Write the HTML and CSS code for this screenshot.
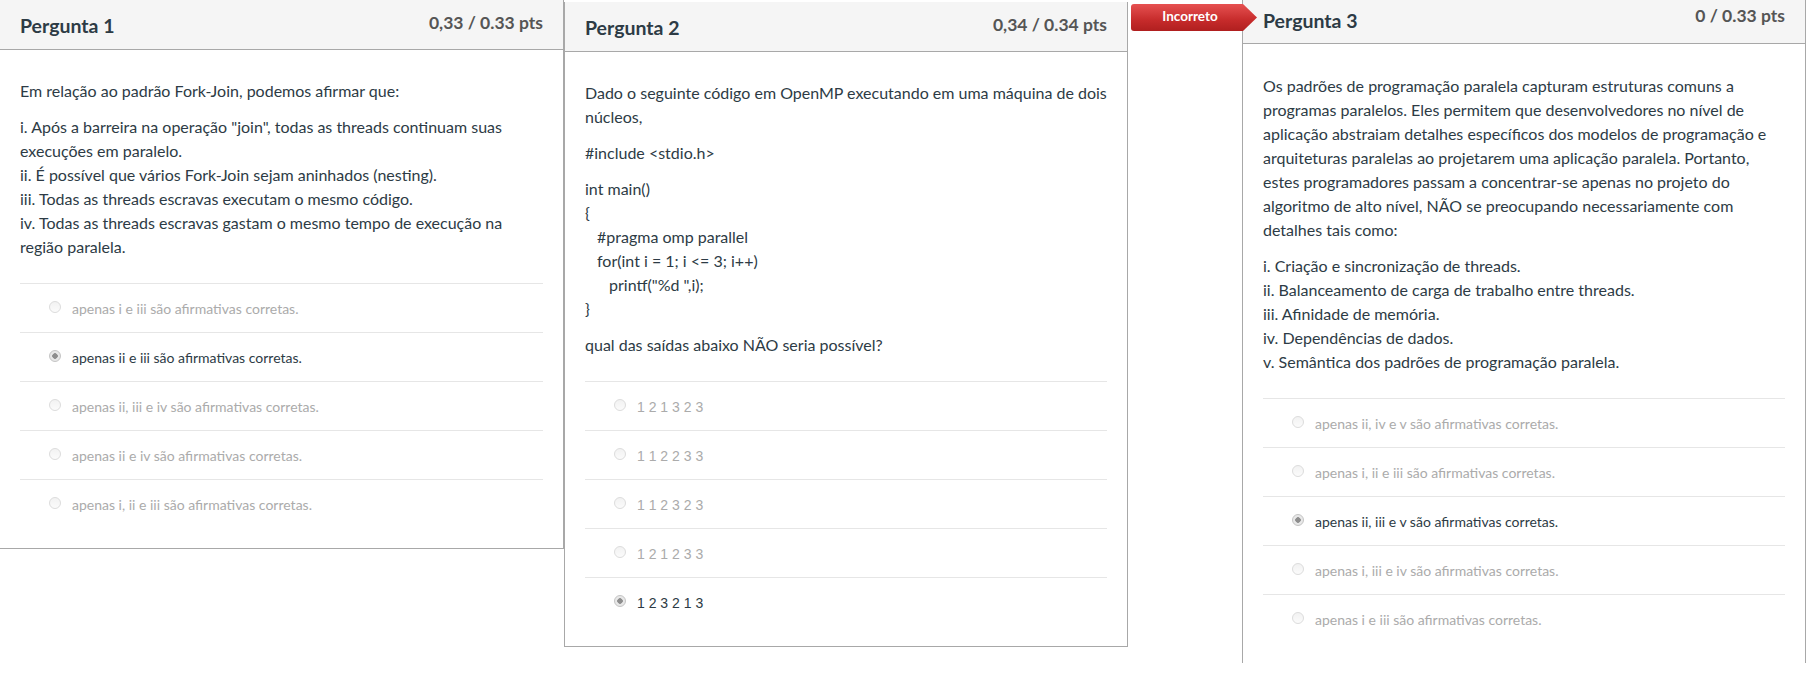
FILE: index.html
```html
<!DOCTYPE html>
<html lang="pt-BR">
<head>
<meta charset="utf-8">
<title>Perguntas</title>
<link rel="stylesheet" href="styles.css">
</head>
<body>
<main class="strip">
  <section class="card card--first">
    <header class="qhead">
      <h2 class="qname">Pergunta 1</h2>
      <span class="qpts">0,33 / 0.33 pts</span>
    </header>
    <div class="qbody">
      <div class="qtext">
        <p>Em relação ao padrão Fork-Join, podemos afirmar que:</p>
        <p>i. Após a barreira na operação "join", todas as threads continuam suas execuções em paralelo.<br>ii. É possível que vários Fork-Join sejam aninhados (nesting).<br>iii. Todas as threads escravas executam o mesmo código.<br>iv. Todas as threads escravas gastam o mesmo tempo de execução na região paralela.</p>
      </div>
      <ul class="answers">
        <li class="ans"><span class="radio"></span><span class="ans-text">apenas i e iii são afirmativas corretas.</span></li>
        <li class="ans ans--sel"><span class="radio"></span><span class="ans-text">apenas ii e iii são afirmativas corretas.</span></li>
        <li class="ans"><span class="radio"></span><span class="ans-text">apenas ii, iii e iv são afirmativas corretas.</span></li>
        <li class="ans"><span class="radio"></span><span class="ans-text">apenas ii e iv são afirmativas corretas.</span></li>
        <li class="ans"><span class="radio"></span><span class="ans-text">apenas i, ii e iii são afirmativas corretas.</span></li>
      </ul>
    </div>
  </section>

  <section class="card card--second">
    <header class="qhead">
      <h2 class="qname">Pergunta 2</h2>
      <span class="qpts">0,34 / 0.34 pts</span>
    </header>
    <div class="qbody">
      <div class="qtext">
        <p>Dado o seguinte código em OpenMP executando em uma máquina de dois núcleos,</p>
        <p>#include &lt;stdio.h&gt;</p>
        <p>int main()<br>{<br><span class="ind1">#pragma omp parallel</span><br><span class="ind1">for(int i = 1; i &lt;= 3; i++)</span><br><span class="ind2">printf("%d ",i);</span><br>}</p>
        <p>qual das saídas abaixo NÃO seria possível?</p>
      </div>
      <ul class="answers answers--nums">
        <li class="ans"><span class="radio"></span><span class="ans-text">1 2 1 3 2 3</span></li>
        <li class="ans"><span class="radio"></span><span class="ans-text">1 1 2 2 3 3</span></li>
        <li class="ans"><span class="radio"></span><span class="ans-text">1 1 2 3 2 3</span></li>
        <li class="ans"><span class="radio"></span><span class="ans-text">1 2 1 2 3 3</span></li>
        <li class="ans ans--sel"><span class="radio"></span><span class="ans-text">1 2 3 2 1 3</span></li>
      </ul>
    </div>
  </section>

  <div class="shot3">
    <div class="badge">Incorreto</div>
    <section class="card card--third">
      <header class="qhead">
        <h2 class="qname">Pergunta 3</h2>
        <span class="qpts">0 / 0.33 pts</span>
      </header>
      <div class="qbody">
        <div class="qtext">
          <p>Os padrões de programação paralela capturam estruturas comuns a programas paralelos. Eles permitem que desenvolvedores no nível de aplicação abstraiam detalhes específicos dos modelos de programação e arquiteturas paralelas ao projetarem uma aplicação paralela. Portanto, estes programadores passam a concentrar-se apenas no projeto do algoritmo de alto nível, NÃO se preocupando necessariamente com detalhes tais como:</p>
          <p>i. Criação e sincronização de threads.<br>ii. Balanceamento de carga de trabalho entre threads.<br>iii. Afinidade de memória.<br>iv. Dependências de dados.<br>v. Semântica dos padrões de programação paralela.</p>
        </div>
        <ul class="answers">
          <li class="ans"><span class="radio"></span><span class="ans-text">apenas ii, iv e v são afirmativas corretas.</span></li>
          <li class="ans"><span class="radio"></span><span class="ans-text">apenas i, ii e iii são afirmativas corretas.</span></li>
          <li class="ans ans--sel"><span class="radio"></span><span class="ans-text">apenas ii, iii e v são afirmativas corretas.</span></li>
          <li class="ans"><span class="radio"></span><span class="ans-text">apenas i, iii e iv são afirmativas corretas.</span></li>
          <li class="ans"><span class="radio"></span><span class="ans-text">apenas i e iii são afirmativas corretas.</span></li>
        </ul>
      </div>
    </section>
  </div>
</main>
</body>
</html>
```

FILE: styles.css
```css
* { box-sizing: border-box; }

html, body {
  margin: 0;
  padding: 0;
  background: #ffffff;
}

body {
  font-family: Lato, "Liberation Sans", sans-serif;
  color: #2d3b45;
  font-size: 16px;
}

.strip {
  display: flex;
  align-items: flex-start;
  width: 1820px;
}

.card {
  width: 564px;
  flex: none;
  background: #ffffff;
  border-left: 1px solid #a8a8a8;
  border-right: 1px solid #a8a8a8;
  border-bottom: 1px solid #a8a8a8;
}

.card--first {
  border-left-width: 0;
}

.card--second {
  margin-top: 2px;
}

.card--third {
  border-bottom: none;
  margin-left: 114px;
}

.qhead {
  display: flex;
  justify-content: space-between;
  align-items: flex-start;
  height: 50px;
  padding: 0 20px;
  background: #f5f5f5;
  border-bottom: 1px solid #a8a8a8;
}

.card--third .qhead {
  height: 44px;
}

.qname {
  margin: 14px 0 0 0;
  font-size: 19.5px;
  line-height: 24px;
  font-weight: 700;
  color: #2d3b45;
}

.qpts {
  margin-top: 11px;
  font-size: 17.5px;
  line-height: 24px;
  font-weight: 700;
  color: #555555;
}

.card--third .qname { margin-top: 9px; }
.card--third .qpts { margin-top: 4px; }

.qbody {
  padding: 29px 20px 20px 20px;
}

.card--third .qbody {
  padding-top: 30px;
}

.qtext {
  padding-bottom: 12px;
}

.qtext p {
  margin: 0 0 12px 0;
  font-size: 16px;
  line-height: 24px;
  color: #2d3b45;
}

.ind1 { padding-left: 12px; }
.ind2 { padding-left: 24px; }

.answers {
  list-style: none;
  margin: 0;
  padding: 0;
}

.ans {
  display: flex;
  align-items: flex-start;
  border-top: 1px solid #e6e6e6;
  padding: 13px 0 11px 29px;
  font-size: 14px;
  line-height: 24px;
  color: #ababab;
}

.radio {
  flex: none;
  width: 12px;
  height: 12px;
  margin-top: 4px;
  margin-right: 11px;
  border-radius: 50%;
  border: 1px solid #dcdcdc;
  background: linear-gradient(#f2f2f2, #fbfbfb);
}

.ans--sel {
  color: #2d3b45;
}

.ans--sel .radio {
  border-color: #c4c4c4;
  background: radial-gradient(circle, #8e8e8e 0 2.5px, #e8e8e8 3px);
}

.answers--nums .ans {
  font-family: "Liberation Sans", Arial, sans-serif;
}

.shot3 {
  position: relative;
  flex: none;
  display: flex;
  align-items: flex-start;
}

.badge {
  position: absolute;
  left: 3px;
  top: 4px;
  width: 126px;
  height: 27px;
  padding-right: 8px;
  border-radius: 3px 0 0 3px;
  background: linear-gradient(#e65151, #c62b2b 60%, #b01f1f);
  clip-path: polygon(0 0, 112px 0, 126px 50%, 112px 100%, 0 100%);
  color: #ffffff;
  font-size: 13.5px;
  font-weight: 700;
  line-height: 25px;
  text-align: center;
  z-index: 2;
}
```
